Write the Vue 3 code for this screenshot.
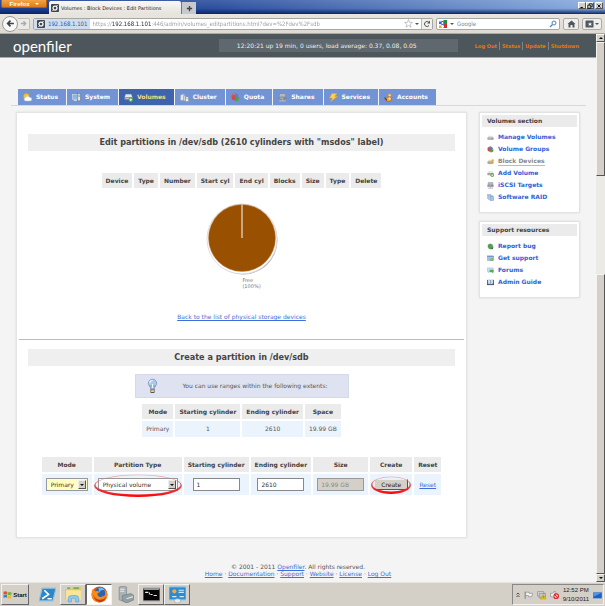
<script setup>
import { ref } from 'vue';

const tabs = [
  { label: 'Status', icon: 'weather' },
  { label: 'System', icon: 'system' },
  { label: 'Volumes', icon: 'drive-add', active: true },
  { label: 'Cluster', icon: 'cluster' },
  { label: 'Quota', icon: 'pie' },
  { label: 'Shares', icon: 'share' },
  { label: 'Services', icon: 'bolt' },
  { label: 'Accounts', icon: 'accounts' },
];

const sections = [
  {
    title: 'Volumes section',
    links: [
      { label: 'Manage Volumes', icon: 'drive' },
      { label: 'Volume Groups', icon: 'pie' },
      { label: 'Block Devices', icon: 'drive-edit', active: true },
      { label: 'Add Volume', icon: 'drive-add' },
      { label: 'iSCSI Targets', icon: 'share' },
      { label: 'Software RAID', icon: 'raid' },
    ],
  },
  {
    title: 'Support resources',
    links: [
      { label: 'Report bug', icon: 'bug' },
      { label: 'Get support', icon: 'support' },
      { label: 'Forums', icon: 'forums' },
      { label: 'Admin Guide', icon: 'book' },
    ],
  },
];

const sessionLinks = ['Log Out', 'Status', 'Update', 'Shutdown'];
const footerLinks = [
  'Home',
  'Documentation',
  'Support',
  'Website',
  'License',
  'Log Out',
];
const deviceColumns = [
  'Device',
  'Type',
  'Number',
  'Start cyl',
  'End cyl',
  'Blocks',
  'Size',
  'Type',
  'Delete',
];
const taskButtons = [
  { name: 'PowerShell', icon: 'powershell' },
  { name: 'Explorer', icon: 'folder', state: 'open' },
  { name: 'Firefox', icon: 'firefox', state: 'current' },
  { name: 'Server Manager', icon: 'server' },
  { name: 'Command Prompt', icon: 'console', state: 'open' },
  { name: 'Control Panel', icon: 'panel', state: 'open' },
];

const address = ref(
  'https://192.168.1.101:446/admin/volumes_editpartitions.html?dev=%2Fdev%2Fsdb',
);
const mode = ref('Primary');
const partitionType = ref('Physical volume');
const startCylinder = ref('1');
const endCylinder = ref('2610');

function resetForm() {
  mode.value = 'Primary';
  partitionType.value = 'Physical volume';
  startCylinder.value = '1';
  endCylinder.value = '2610';
}
</script>

<template>
  <div class="desktop">
    <!-- Shared icon shapes, all on a 16x16 grid. -->
    <svg class="sprite" aria-hidden="true">
      <linearGradient id="ring-red" x1="0" y1="0" x2="0" y2="1">
        <stop offset="0" stop-color="#e86060" stop-opacity=".4" />
        <stop offset=".5" stop-color="#e04040" stop-opacity=".9" />
        <stop offset="1" stop-color="#f00" />
      </linearGradient>
      <symbol id="weather" viewBox="0 0 16 16">
        <circle cx="6" cy="6" r="5" fill="#f9c933" stroke="#e39a1c" />
        <path d="M5 14a3 3 0 0 1 0-6 4 4 0 0 1 7 0 3 3 0 0 1 1 6z" fill="#fff" stroke="#b9c6dc" />
      </symbol>
      <symbol id="system" viewBox="0 0 16 16">
        <rect x="1" y="3" width="9" height="8" fill="#8fb4e4" stroke="#dfe5ee" />
        <path d="M3 13h6" stroke="#d6dbe2" stroke-width="2" />
        <rect x="10" y="1" width="5" height="13" fill="#dfe3e8" stroke="#667590" />
        <path d="M11 4h3M11 6h3" stroke="#667590" />
      </symbol>
      <symbol id="drive" viewBox="0 0 16 16">
        <path d="M3 4h10l2 5H1z" fill="#e2e2e2" />
        <rect x="1" y="8" width="14" height="5" rx="1" fill="#969a9f" />
        <path d="M3 10.500h7" stroke="#e9e9e9" />
        <path d="M12 10.500h2" stroke="#5fc04d" />
      </symbol>
      <symbol id="drive-add" viewBox="0 0 16 16">
        <path d="M3 2h10l2 6H1z" fill="#e6e6e6" />
        <rect x="1" y="7" width="14" height="5" rx="1" fill="#93989e" />
        <path d="M3 9.500h6" stroke="#eee" />
        <circle cx="12" cy="12" r="4" fill="#47a531" />
        <path d="M12 9.500v5M9.500 12h5" stroke="#fff" stroke-width="1.500" />
      </symbol>
      <symbol id="drive-edit" viewBox="0 0 16 16">
        <path d="M3 4h10l2 5H1z" fill="#dedede" />
        <rect x="1" y="8" width="14" height="5" rx="1" fill="#9ea1a6" />
        <path d="M6 14l1-4 6-7 3 2-7 8z" fill="#f3b64a" stroke="#c88b2d" stroke-width=".8" />
      </symbol>
      <symbol id="cluster" viewBox="0 0 16 16">
        <path d="M1 4l4-2 3 1v10l-7 0z" fill="#e6e8ea" stroke="#a4adba" />
        <rect x="6" y="5" width="4" height="9" fill="#cfd4da" stroke="#8d97a5" />
        <rect x="10" y="7" width="5" height="8" fill="#f1f2f3" stroke="#8d97a5" />
        <path d="M11 10h3" stroke="#61ac51" />
      </symbol>
      <symbol id="pie" viewBox="0 0 16 16">
        <circle cx="7" cy="7" r="6" fill="#d34b46" />
        <path d="M7 7V1a6 6 0 0 1 6 6z" fill="#4b87d6" />
        <path d="M8 8h7a7 7 0 0 1-7 7z" fill="#49a843" />
        <path d="M3 4a5 5 0 0 1 4-2" fill="none" stroke="#f2a39e" />
      </symbol>
      <symbol id="share" viewBox="0 0 16 16">
        <path d="M3 1h10l1 6H2z" fill="#b5bac1" stroke="#7b828c" />
        <rect x="1" y="7" width="14" height="4" fill="#80868e" />
        <path d="M3 9h7" stroke="#e1e4e8" />
        <path d="M8 11v3M2 14h12" stroke="#aeb5bd" stroke-width="2" />
      </symbol>
      <symbol id="bolt" viewBox="0 0 16 16">
        <path d="M5 1h9l-4 5h5L3 15l3-6H1z" fill="#fcd255" stroke="#e8a11d" />
      </symbol>
      <symbol id="accounts" viewBox="0 0 16 16">
        <circle cx="10" cy="4" r="3" fill="#f4cf98" stroke="#b87524" />
        <path d="M2 11l6-5 6 4-3 5H5z" fill="#e8a33a" stroke="#a85f1b" />
        <path d="M1 8l4 5" stroke="#5b3a21" stroke-width="2" />
        <circle cx="10" cy="10" r="2" fill="#f9e3b9" />
      </symbol>
      <symbol id="raid" viewBox="0 0 16 16">
        <rect x="1" y="1" width="8" height="9" fill="#d3e3f7" stroke="#7c9dce" />
        <rect x="4" y="3" width="8" height="9" fill="#c1d7f2" stroke="#7c9dce" />
        <rect x="7" y="6" width="8" height="9" fill="#a3c4ec" stroke="#6688be" />
      </symbol>
      <symbol id="bug" viewBox="0 0 16 16">
        <path d="M2 4l12 9M13 3L3 14M1 9h14" stroke="#56705a" />
        <ellipse cx="8" cy="8" rx="5" ry="6" fill="#4fa64a" stroke="#2f7d34" transform="rotate(-35 8 8)" />
        <circle cx="12" cy="12" r="2" fill="#565b55" />
      </symbol>
      <symbol id="support" viewBox="0 0 16 16">
        <rect x="1" y="2" width="14" height="11" fill="#c8dcf3" stroke="#6686b2" />
        <path d="M1 4h14" stroke="#4b79bd" stroke-width="2" />
        <path d="M3 8h5M3 10h4" stroke="#6885ac" />
        <circle cx="11" cy="10" r="3.500" fill="#6fb04f" />
        <path d="M11 8v4" stroke="#fff" />
      </symbol>
      <symbol id="forums" viewBox="0 0 16 16">
        <path d="M1 2h13v8H6l-3 3v-3H1z" fill="#c9def7" stroke="#88a9d1" />
        <path d="M6 6h9v6h-1l1 3-4-3H6z" fill="#58ab4a" />
      </symbol>
      <symbol id="book" viewBox="0 0 16 16">
        <path d="M0 2h16v12H0z" fill="#465a86" />
        <path d="M2 2q3-1 6 1 3-2 6-1v9q-3-1-6 1-3-2-6-1z" fill="#c9d8ec" />
        <path d="M8 3v9" stroke="#5d6e89" />
      </symbol>
      <symbol id="logo" viewBox="0 0 16 16">
        <rect width="16" height="16" rx="2" fill="#40474c" />
        <circle cx="8" cy="8" r="4" fill="none" stroke="#fff" stroke-width="2.500" />
        <path d="M11 2l2 2M3 12l2 2" stroke="#fff" stroke-width="2" />
      </symbol>
      <symbol id="google" viewBox="0 0 16 16">
        <rect width="16" height="16" fill="#f4f6fb" />
        <path d="M0 3h5v5H0z" fill="#3369e8" />
        <path d="M9 0h7v8H9z" fill="#19963c" />
        <path d="M9 8h7v8H9z" fill="#d62f27" />
        <path d="M0 11h6v5H0z" fill="#edb41a" />
        <circle cx="7" cy="6" r="4" fill="#2f63cf" />
        <circle cx="7" cy="6" r="2" fill="#fff" />
        <path d="M5 13h5" stroke="#fff" stroke-width="2.500" />
      </symbol>
      <symbol id="powershell" viewBox="0 0 16 16">
        <path d="M3 2h13l-3 12H0z" fill="#2f86c6" stroke="#8cc4e8" />
        <path d="M5 4l4 4-6 4M8 12h4" fill="none" stroke="#fff" stroke-width="1.500" />
      </symbol>
      <symbol id="folder" viewBox="0 0 16 16">
        <path d="M0 3h6l1-2h8v12H0z" fill="#e6c55b" />
        <path d="M1 4h14v9H1z" fill="#f8e59b" />
        <path d="M2 2h3M8 2h5" stroke="#5d9c4f" />
        <path d="M3 15v-3q0-3 3-3h4q3 0 3 3v3h-3v-3H6v3z" fill="#8fcaec" stroke="#5a9fd0" stroke-width=".6" />
      </symbol>
      <symbol id="firefox" viewBox="0 0 16 16">
        <circle cx="8" cy="8" r="7.500" fill="#e25a12" />
        <circle cx="9" cy="6.500" r="5.500" fill="#2a65b4" />
        <path d="M7 2q4-2 6 2-4-1-5 2z" fill="#74b7ea" />
        <path d="M1 3q2 1 3 2 3-1 4 1-2 0-2 2 1 3 4 2l3-1q1-4-1-6 4 2 3.500 6-1 6-7.500 6.500Q.500 15 .500 8z" fill="#f58b1f" />
        <path d="M2 8q2 5 7 5 3 0 5-3-1 5-6 5-5-1-6-7z" fill="#c63a10" />
      </symbol>
      <symbol id="server" viewBox="0 0 16 16">
        <path d="M2 1l4-1 3 1v12l-4 1-3-1z" fill="#a9b2b5" stroke="#788488" stroke-width=".6" />
        <path d="M3 3h4M3 5h4" stroke="#e5eaeb" />
        <path d="M5 9l8-2 3 2v4l-7 3-4-2z" fill="#929fa3" stroke="#6f7d82" stroke-width=".6" />
        <path d="M9 12l6-2" stroke="#dfe5e7" />
      </symbol>
      <symbol id="console" viewBox="0 0 16 16">
        <rect x="0" y="2" width="16" height="12" fill="#050505" stroke="#9a9a9a" />
        <path d="M1 3h14" stroke="#cfd6df" />
        <path d="M2 6h3M6 6v2M7 8h2M10 9h3" stroke="#ededed" />
      </symbol>
      <symbol id="panel" viewBox="0 0 16 16">
        <rect x="0" y="1" width="16" height="12" rx="1" fill="#2f8bcf" stroke="#78b9e6" />
        <circle cx="5" cy="5" r="2" fill="#f4a93b" />
        <path d="M9 4h5M9 6h5M3 10h4M10 10h4" stroke="#d0eafc" />
        <ellipse cx="8" cy="14" rx="3" ry="2" fill="#e9edf0" stroke="#9aa5ad" stroke-width=".6" />
      </symbol>
    </svg>

    <header class="title-bar">
      <button class="firefox-button" type="button">Firefox <i class="caret"></i></button>
      <div class="browser-tab">
        <svg class="icon"><use href="#logo" /></svg>
        <span>Volumes : Block Devices : Edit Partitions</span>
      </div>
      <button class="new-tab" type="button" aria-label="New tab">
        <svg viewBox="0 0 8 8"><path d="M4 1v6M1 4h6" stroke="#444" stroke-width="1.500" /></svg>
      </button>
      <div class="window-controls">
        <button type="button" aria-label="Minimize">
          <svg viewBox="0 0 8 8"><path d="M2 6h3" stroke="#000" stroke-width="1.500" /></svg>
        </button>
        <button type="button" aria-label="Restore">
          <svg viewBox="0 0 8 8"><path d="M3 3V1h4v4H5M1 3h4v4H1z" fill="none" stroke="#000" /></svg>
        </button>
        <button type="button" aria-label="Close">
          <svg viewBox="0 0 8 8"><path d="M2 2l4 4M6 2l-4 4" stroke="#000" stroke-width="1.200" /></svg>
        </button>
      </div>
    </header>

    <nav class="nav-bar">
      <div class="history">
        <button class="back" type="button" aria-label="Back">
          <svg viewBox="0 0 16 16"><path d="M14 8H3M8 3L3 8l5 5" fill="none" stroke="#3c4247" stroke-width="3" /></svg>
        </button>
        <button class="forward" type="button" aria-label="Forward">
          <svg viewBox="0 0 16 16"><path d="M2 8h10M8 3l5 5-5 5" fill="none" stroke="#aaa" stroke-width="3" /></svg>
        </button>
      </div>
      <div class="address">
        <span class="identity">
          <svg class="icon"><use href="#logo" /></svg>
          192.168.1.101
        </span>
        <input v-model="address" class="url" type="text" aria-label="Address" />
        <svg class="star" viewBox="0 0 16 16">
          <path d="M8 1l2 5h5l-4 3.500 1.500 5L8 11.500l-4.500 3 1.500-5L1 6h5z" fill="#fff" stroke="#999" />
        </svg>
        <i class="caret dark"></i>
        <button class="reload" type="button" aria-label="Reload">
          <svg viewBox="0 0 16 16">
            <path d="M12 11a5 5 0 1 1 0-6" fill="none" stroke="#555" stroke-width="2" />
            <path d="M14 1v6H8z" fill="#555" />
          </svg>
        </button>
      </div>
      <div class="search">
        <svg class="icon"><use href="#google" /></svg>
        <i class="caret dark"></i>
        <input type="text" placeholder="Google" aria-label="Search" />
        <svg class="magnifier" viewBox="0 0 16 16">
          <circle cx="10" cy="6" r="4" fill="none" stroke="#4e83bd" stroke-width="2" />
          <path d="M7 9l-5 5" stroke="#4e83bd" stroke-width="2.500" />
        </svg>
      </div>
      <button class="tool" type="button" aria-label="Home">
        <svg viewBox="0 0 16 16"><path d="M8 1L0 8h2v7h4v-5h4v5h4V8h2z" fill="#4e565e" /></svg>
      </button>
      <button class="tool" type="button" aria-label="Bookmarks">
        <svg viewBox="0 0 16 16">
          <rect y="1" width="16" height="14" rx="1" fill="#505860" />
          <path d="M9 4l1 3h3l-2 2 1 3-3-2-3 2 1-3-2-2h3z" fill="#fff" />
        </svg>
        <i class="caret dark"></i>
      </button>
    </nav>

    <div class="viewport">
      <div class="page">
        <header class="banner">
          <span class="brand">openfiler</span>
          <span class="uptime">12:20:21 up 19 min, 0 users, load average: 0.37, 0.08, 0.05</span>
          <nav class="session">
            <a v-for="link in sessionLinks" :key="link" href="#">{{ link }}</a>
          </nav>
        </header>

        <nav class="tabs">
          <a
            v-for="tab in tabs"
            :key="tab.label"
            href="#"
            :class="{ active: tab.active }">
            <svg class="icon"><use :href="'#' + tab.icon" /></svg>
            {{ tab.label }}
          </a>
        </nav>

        <div class="columns">
          <main class="content">
            <h2>Edit partitions in /dev/sdb (2610 cylinders with "msdos" label)</h2>

            <table class="devices">
              <thead>
                <tr>
                  <th v-for="(column, i) in deviceColumns" :key="i">{{ column }}</th>
                </tr>
              </thead>
            </table>

            <figure class="usage">
              <svg viewBox="0 0 72 72" aria-hidden="true">
                <circle cx="37" cy="37" r="34.500" fill="#aaa" />
                <circle cx="36" cy="36" r="35" fill="#fff" stroke="#ddd" />
                <circle cx="36" cy="35" r="33.500" fill="#995000" stroke="#c08a55" stroke-width=".5" />
                <path d="M36 1v34" stroke="#dcc5a8" stroke-width="1.500" />
              </svg>
              <figcaption>Free<br />(100%)</figcaption>
            </figure>

            <a class="back-link" href="#">Back to the list of physical storage devices</a>

            <hr />

            <h2>Create a partition in /dev/sdb</h2>

            <p class="hint">
              <svg viewBox="0 0 16 22">
                <circle cx="8" cy="7" r="6" fill="#a9c9ee" stroke="#7189ac" />
                <path d="M4 11h8l-2 5H6z" fill="#a9c9ee" stroke="#7189ac" />
                <path d="M4 7a4 4 0 0 1 4-4M8 8v6" fill="none" stroke="#f2f8ff" stroke-width="1.500" />
                <rect x="5" y="15" width="6" height="6" rx="1" fill="#555441" />
                <path d="M6 17h4M6 19h4" stroke="#f0de78" stroke-width="1.500" />
              </svg>
              <span>You can use ranges within the following extents:</span>
            </p>

            <table class="extents">
              <thead>
                <tr>
                  <th>Mode</th>
                  <th>Starting cylinder</th>
                  <th>Ending cylinder</th>
                  <th>Space</th>
                </tr>
              </thead>
              <tbody>
                <tr>
                  <td>Primary</td>
                  <td>1</td>
                  <td>2610</td>
                  <td>19.99 GB</td>
                </tr>
              </tbody>
            </table>

            <form @submit.prevent>
              <table class="create">
                <thead>
                  <tr>
                    <th><label for="mode">Mode</label></th>
                    <th><label for="type">Partition Type</label></th>
                    <th><label for="start">Starting cylinder</label></th>
                    <th><label for="end">Ending cylinder</label></th>
                    <th><label for="size">Size</label></th>
                    <th>Create</th>
                    <th>Reset</th>
                  </tr>
                </thead>
                <tbody>
                  <tr>
                    <td>
                      <span class="select mode">
                        <select id="mode" v-model="mode">
                          <option>Primary</option>
                        </select>
                        <i class="drop"></i>
                      </span>
                    </td>
                    <td>
                      <span class="select type">
                        <select id="type" v-model="partitionType">
                          <option>Physical volume</option>
                        </select>
                        <i class="drop"></i>
                        <svg class="ring" viewBox="0 0 88 24" preserveAspectRatio="none">
                          <path fill-rule="evenodd" d="M0 12a44 11.500 0 0 1 88 0a44 12 0 0 1-88 0zM1.500 11.500a42.500 10.300 0 0 1 85 0a42.500 9.800 0 0 1-85 0z" fill="url(#ring-red)" />
                        </svg>
                      </span>
                    </td>
                    <td><input id="start" v-model="startCylinder" type="text" /></td>
                    <td><input id="end" v-model="endCylinder" type="text" /></td>
                    <td><input id="size" type="text" value="19.99 GB" disabled /></td>
                    <td>
                      <span class="submit">
                        <button type="submit">Create</button>
                        <svg class="ring" viewBox="0 0 40 18" preserveAspectRatio="none">
                          <path fill-rule="evenodd" d="M0 9a20 8.500 0 0 1 40 0a20 9 0 0 1-40 0zM1.500 8.500a18.500 7.300 0 0 1 37 0a18.500 7 0 0 1-37 0z" fill="url(#ring-red)" />
                        </svg>
                      </span>
                    </td>
                    <td><a href="#" @click.prevent="resetForm">Reset</a></td>
                  </tr>
                </tbody>
              </table>
            </form>
          </main>

          <aside class="sidebar">
            <section v-for="section in sections" :key="section.title">
              <h3>{{ section.title }}</h3>
              <ul>
                <li v-for="link in section.links" :key="link.label">
                  <svg class="icon"><use :href="'#' + link.icon" /></svg>
                  <a href="#" :class="{ active: link.active }">{{ link.label }}</a>
                </li>
              </ul>
            </section>
          </aside>
        </div>

        <footer class="footer">
          <div>© 2001 - 2011 <a href="#">Openfiler</a>. All rights reserved.</div>
          <div>
            <template v-for="(link, i) in footerLinks" :key="link">
              <template v-if="i"> · </template><a href="#">{{ link }}</a>
            </template>
          </div>
        </footer>
      </div>

      <div class="scrollbar" aria-hidden="true">
        <i class="arrow up"></i>
        <i class="thumb"></i>
        <i class="track"></i>
        <i class="thumb rest"></i>
        <i class="arrow down"></i>
      </div>
    </div>

    <footer class="taskbar">
      <button class="start" type="button">
        <svg viewBox="0 0 16 16">
          <path d="M1 3q3-2 6 0v5q-3-2-6 0z" fill="#e2512b" />
          <path d="M8 3q3 2 7 0v5q-4 2-7 0z" fill="#6fb237" />
          <path d="M1 9q3-2 6 0v5q-3-2-6 0z" fill="#3b7fd1" />
          <path d="M8 9q3 2 7 0v5q-4 2-7 0z" fill="#f5b91f" />
        </svg>
        Start
      </button>
      <button
        v-for="task in taskButtons"
        :key="task.name"
        class="task"
        :class="task.state"
        type="button"
        :aria-label="task.name">
        <svg><use :href="'#' + task.icon" /></svg>
      </button>
      <div class="tray">
        <svg viewBox="0 0 8 12">
          <path d="M1 5l3-3 3 3M1 10l3-3 3 3" fill="none" stroke="#222" stroke-width="1.500" />
        </svg>
        <svg class="wide" viewBox="0 0 16 16">
          <path d="M2 2v13" stroke="#777" stroke-width="1.500" />
          <path d="M3 3h6v2h6l-1 6H8V9H3z" fill="#f5f5f5" stroke="#777" />
        </svg>
        <svg class="wide" viewBox="0 0 16 16">
          <path d="M1 2h11v8H1z" fill="#ddd" stroke="#777" />
          <path d="M4 5h11v8H4z" fill="#c4c8c9" stroke="#777" />
          <path d="M11 7l5 8H6z" fill="#f6d21c" stroke="#b59009" />
          <path d="M11 10v3" stroke="#222" />
        </svg>
        <svg class="wide" viewBox="0 0 16 16">
          <path d="M1 5h3l5-4v14l-5-4H1z" fill="#eee" stroke="#777" />
          <circle cx="11" cy="10" r="4" fill="#fff" stroke="#d8262c" stroke-width="2" />
          <path d="M8 7l6 6" stroke="#d8262c" stroke-width="2" />
        </svg>
        <div class="clock">12:52 PM<br />9/10/2011</div>
        <svg class="wide" viewBox="0 0 16 16">
          <rect y="3" width="16" height="11" fill="#1d5fc4" stroke="#8fb2e2" />
          <path d="M1 4h14L1 11z" fill="#5794e4" />
        </svg>
      </div>
    </footer>
  </div>
</template>

<style>
body {
  margin: 0;
}
</style>

<style scoped>
.desktop {
  display: flex;
  flex-direction: column;
  min-height: 100vh;
  background: #d4d0c8;
  color: #555;
  font-family: 'DejaVu Sans', Verdana, sans-serif;
  font-size: 6px;
  line-height: 8px;
}

.desktop *,
.desktop *::before {
  box-sizing: border-box;
}

.sprite {
  position: absolute;
  width: 0;
  height: 0;
}

button,
input,
select {
  margin: 0;
  padding: 0;
  border: 0;
  border-radius: 0;
  font: inherit;
  color: inherit;
  background: none;
}

svg {
  display: block;
  flex: none;
}

a {
  color: #3d6fd8;
}

.icon {
  width: 8px;
  height: 8px;
}

.caret {
  border: 2px solid transparent;
  border-top-color: #fff;
  border-bottom: 0;
}

.caret.dark {
  border-top-color: #555;
}

/* Browser window */
.title-bar {
  display: flex;
  align-items: flex-end;
  height: 14px;
  padding-left: 1px;
  background:
    linear-gradient(rgba(255, 255, 255, 0.1), transparent 60%, #0a246a),
    linear-gradient(90deg, #1c3c94, #2c4f9e 35%, #8cafe0);
}

.firefox-button {
  display: flex;
  align-items: center;
  justify-content: center;
  gap: 5px;
  align-self: flex-start;
  width: 46px;
  height: 8px;
  border: 1px solid #b75f10;
  border-top: 0;
  border-radius: 0 0 2px 2px;
  background: linear-gradient(#f2a44b, #e07a14);
  color: #fff;
  font-family: 'Liberation Sans', Arial, sans-serif;
  font-weight: bold;
}

.browser-tab {
  display: flex;
  align-items: center;
  gap: 2px;
  width: 132px;
  height: 13px;
  margin-left: 2px;
  padding-left: 2px;
  border-radius: 2px 2px 0 0;
  background: linear-gradient(#f8f8f6, #e6e3dd);
  color: #222;
  font-size: 5px;
  white-space: nowrap;
}

.new-tab {
  display: grid;
  place-items: center;
  width: 15px;
  height: 12px;
  border-left: 1px solid #777;
  background: #c6c9ce;
}

.new-tab svg {
  width: 7px;
  height: 7px;
}

.window-controls {
  display: flex;
  align-self: center;
  margin-left: auto;
  padding: 0 2px 4px 0;
}

.window-controls button {
  display: grid;
  place-items: center;
  width: 8px;
  height: 7px;
  border: 1px solid;
  border-color: #fff #555 #555 #fff;
  background: #d4d0c8;
}

.window-controls button:last-child {
  margin-left: 1px;
}

.window-controls svg {
  width: 6px;
  height: 6px;
}

.nav-bar {
  display: flex;
  align-items: center;
  gap: 3px;
  height: 20px;
  padding: 0 3px 0 2px;
  border-bottom: 1px solid #aaa;
  background: linear-gradient(#e8e5df, #dedad2);
}

.history {
  display: flex;
  align-items: center;
}

.history button,
.tool,
.reload {
  display: grid;
  place-items: center;
}

.back {
  width: 16px;
  height: 16px;
  border: 1px solid #999;
  border-radius: 50%;
  background: #f8f8f7;
}

.forward {
  width: 12px;
  height: 12px;
  border: 1px solid #bbb;
  border-left: 0;
  border-radius: 0 2px 2px 0;
  background: #eceae6;
}

.back svg {
  width: 9px;
  height: 9px;
}

.forward svg {
  width: 7px;
  height: 7px;
}

.address,
.search {
  display: flex;
  align-items: center;
  height: 12px;
  border: 1px solid #a6a6a6;
  border-radius: 2px;
  background: #fff;
  font-family: 'DejaVu Sans Condensed', 'DejaVu Sans', sans-serif;
}

.address {
  flex: 1;
  gap: 2px;
}

.identity {
  display: flex;
  align-items: center;
  gap: 3px;
  height: 10px;
  padding: 0 3px;
  background: #cfddf1;
  color: #36588f;
}

.url {
  flex: 1;
  min-width: 0;
  /* Only the host part of the address is dark. */
  background: linear-gradient(90deg, #999 20px, #222 20px 59px, #999 59px);
  background-clip: text;
  color: transparent;
}

.star {
  width: 9px;
  height: 9px;
}

.reload {
  width: 11px;
  height: 10px;
  border-left: 1px solid #bbb;
  background: #f1f0ed;
}

.reload svg,
.magnifier {
  width: 8px;
  height: 8px;
}

.search {
  gap: 3px;
  width: 124px;
  padding: 0 2px;
}

.search input {
  flex: 1;
  min-width: 0;
}

.search input::placeholder {
  color: #888;
}

.tool {
  grid-auto-flow: column;
  gap: 1px;
  min-width: 16px;
  height: 12px;
  padding: 0 2px;
  border: 1px solid #aaa;
  border-radius: 2px;
  background: #efeeeb;
}

.tool svg {
  width: 9px;
  height: 8px;
}

.viewport {
  display: flex;
  flex: 1;
}

.page {
  display: flex;
  flex: 1;
  flex-direction: column;
  background: #f4f4f4;
}

/* Openfiler page */
.banner {
  display: flex;
  align-items: center;
  height: 24px;
  padding: 0 17px 0 13px;
  border-bottom: 1px solid #aaa;
  background: #4d565b;
}

.brand {
  flex: 1;
  color: #fff;
  font-family: Lato, sans-serif;
  font-size: 15px;
  line-height: 18px;
}

.uptime {
  width: 239px;
  margin-right: 17px;
  padding: 3px 18px 2px;
  background: #5e686e;
  color: #eee;
  white-space: nowrap;
}

.session {
  display: flex;
  font-size: 5px;
  font-weight: bold;
}

.session a {
  color: #e8780c;
  text-decoration: none;
}

.session a + a {
  margin-left: 2px;
  padding-left: 2px;
  border-left: 1px solid #7c868b;
}

.tabs {
  display: flex;
  gap: 1px;
  margin: 31px 10px 0 11px;
  padding-left: 7px;
  border-bottom: 1px solid #d8d8d8;
}

.tabs a {
  display: flex;
  align-items: center;
  gap: 4px;
  height: 16px;
  padding: 0 8px 0 5px;
  background: #7394d4;
  color: #fff;
  font-weight: bold;
  text-decoration: none;
}

.tabs .icon {
  width: 9px;
  height: 9px;
}

.tabs a.active {
  background: #3f64ae;
  color: #f2dc80;
}

.columns {
  display: flex;
  align-items: flex-start;
  gap: 12px;
  margin: 6px 16px 0;
}

.content {
  flex: 1;
  padding: 21px 0 40px;
  border: 1px solid #e4e4e4;
  background: #fff;
  box-shadow: 0 0 2px #ddd;
  text-align: center;
}

h2 {
  margin: 0 11px;
  padding: 4px 0;
  background: #efefef;
  color: #444;
  font-family: 'DejaVu Sans Condensed', 'DejaVu Sans', sans-serif;
  font-size: 9px;
  line-height: 9px;
}

table {
  margin: 0 auto;
  border-spacing: 2px;
}

th {
  height: 15px;
  padding: 0 4px;
  background: #ebebeb;
  color: #444;
}

td {
  height: 16px;
  padding: 0 4px;
  background: #ebf4fd;
}

.devices {
  margin-top: 20px;
}

.usage {
  display: flex;
  flex-direction: column;
  align-items: center;
  margin: 13px 0 0;
}

.usage svg {
  width: 72px;
  height: 72px;
}

.usage figcaption {
  margin: 2px 0 0 20px;
  color: #777;
  font-size: 5px;
  line-height: 6px;
  text-align: left;
}

.back-link {
  display: block;
  margin-top: 24px;
}

hr {
  margin: 18px 2px 9px;
  border: 0;
  border-top: 1px solid #bbb;
}

.hint {
  display: flex;
  align-items: center;
  width: 214px;
  height: 24px;
  margin: 8px auto 4px;
  padding: 0 11px;
  border: 1px solid #d5daea;
  background: #dfe3f1;
}

.hint svg {
  width: 11px;
  height: 16px;
}

.hint span {
  flex: 1;
  padding-left: 16px;
}

.create {
  margin-top: 16px;
}

.create td {
  height: 21px;
}

.create input {
  display: block;
  width: 47px;
  height: 13px;
  margin: 0 auto;
  padding: 0 3px;
  border: 1px solid #888;
  background: #fff;
  color: #333;
}

.create input:disabled {
  border-color: #999;
  background: #d4d0c8;
  color: #888;
}

.select,
.submit {
  position: relative;
  display: flex;
}

.select select {
  width: 100%;
  height: 13px;
  padding: 0 11px 0 4px;
  border: 1px solid #999;
  background: #fff;
  color: #333;
  appearance: none;
}

.select.mode {
  width: 42px;
}

.select.mode select {
  background: #ffffc4;
}

.select.type {
  width: 80px;
}

.drop {
  position: absolute;
  top: 2px;
  right: 2px;
  display: grid;
  place-items: center;
  width: 8px;
  height: 9px;
  border: 1px solid;
  border-color: #eee #555 #555 #eee;
  background: #d4d0c8;
  pointer-events: none;
}

.drop::before {
  content: '';
  border: 2px solid transparent;
  border-top-color: #111;
  border-bottom: 0;
}

.ring {
  position: absolute;
  inset: -4px -4px -6px;
  width: calc(100% + 8px);
  height: calc(100% + 10px);
  pointer-events: none;
}

.submit .ring {
  inset: -3px -3px -4px;
  width: calc(100% + 6px);
  height: calc(100% + 7px);
}

.submit button {
  width: 34px;
  height: 11px;
  border: 1px solid;
  border-color: #eee #555 #555 #eee;
  background: #d4d0c8;
  color: #222;
}

.sidebar {
  width: 101px;
}

.sidebar section {
  margin-bottom: 8px;
  padding: 2px 2px 9px;
  border: 1px solid #e2e2e2;
  background: #fff;
  box-shadow: 0 0 2px #ddd;
}

h3 {
  margin: 0;
  padding: 2px 5px;
  background: #ebebeb;
  color: #444;
  font-size: 6px;
  line-height: 8px;
}

.sidebar ul {
  margin: 4px 0 0;
  padding: 0 5px;
  list-style: none;
}

.sidebar li {
  display: flex;
  align-items: center;
  gap: 4px;
  height: 12px;
}

.sidebar .icon {
  width: 7px;
  height: 7px;
}

.sidebar a {
  color: #2f62d9;
  font-weight: bold;
  text-decoration: none;
}

.sidebar a.active {
  border-bottom: 1px solid #bbb;
  color: #8a8a8a;
}

.footer {
  margin-top: auto;
  padding: 24px 0 5px;
  line-height: 7px;
  text-align: center;
}

.scrollbar {
  display: flex;
  flex-direction: column;
  width: 9px;
  background: #eceae5;
}

.scrollbar i {
  border: 1px solid;
  border-color: #f5f3ef #555 #555 #f5f3ef;
  background: #d4d0c8;
}

.arrow {
  display: grid;
  place-items: center;
  height: 8px;
}

.arrow::before {
  content: '';
  border: 2px solid transparent;
}

.arrow.up::before {
  border-bottom-color: #111;
  border-top: 0;
}

.arrow.down::before {
  border-top-color: #111;
  border-bottom: 0;
}

.thumb {
  flex: 133;
}

.scrollbar .track {
  flex: 98;
  border: 0;
  background: #eceae5;
}

.thumb.rest {
  flex: 300;
}

/* Windows taskbar */
.taskbar {
  display: flex;
  align-items: center;
  height: 24px;
  padding: 1px;
  border-top: 1px solid #e6e4df;
}

.start {
  display: flex;
  align-items: center;
  justify-content: center;
  gap: 1px;
  width: 28px;
  height: 21px;
  margin-right: 5px;
  color: #111;
  font-family: 'Liberation Sans', Arial, sans-serif;
  font-weight: bold;
}

.start svg {
  width: 9px;
  height: 9px;
}

.task {
  display: grid;
  place-items: center;
  width: 26px;
  height: 21px;
  border: 1px solid transparent;
}

.task svg {
  width: 17px;
  height: 17px;
}

.start,
.task.open,
.tray {
  border: 1px solid;
  border-color: #f4f2ee #666 #666 #f4f2ee;
}

.task.current {
  border: 1px solid;
  border-color: #666 #f4f2ee #f4f2ee #666;
  background: #fff;
}

.tray {
  display: flex;
  align-items: center;
  gap: 4px;
  height: 21px;
  margin-left: auto;
  padding: 0 1px 0 3px;
  border-color: #888 #f4f2ee #f4f2ee #888;
}

.tray svg {
  width: 4px;
  height: 6px;
}

.tray .wide {
  width: 9px;
  height: 10px;
}

.clock {
  color: #222;
  font-family: 'Liberation Sans', Arial, sans-serif;
  line-height: 9px;
  text-align: center;
}
</style>
